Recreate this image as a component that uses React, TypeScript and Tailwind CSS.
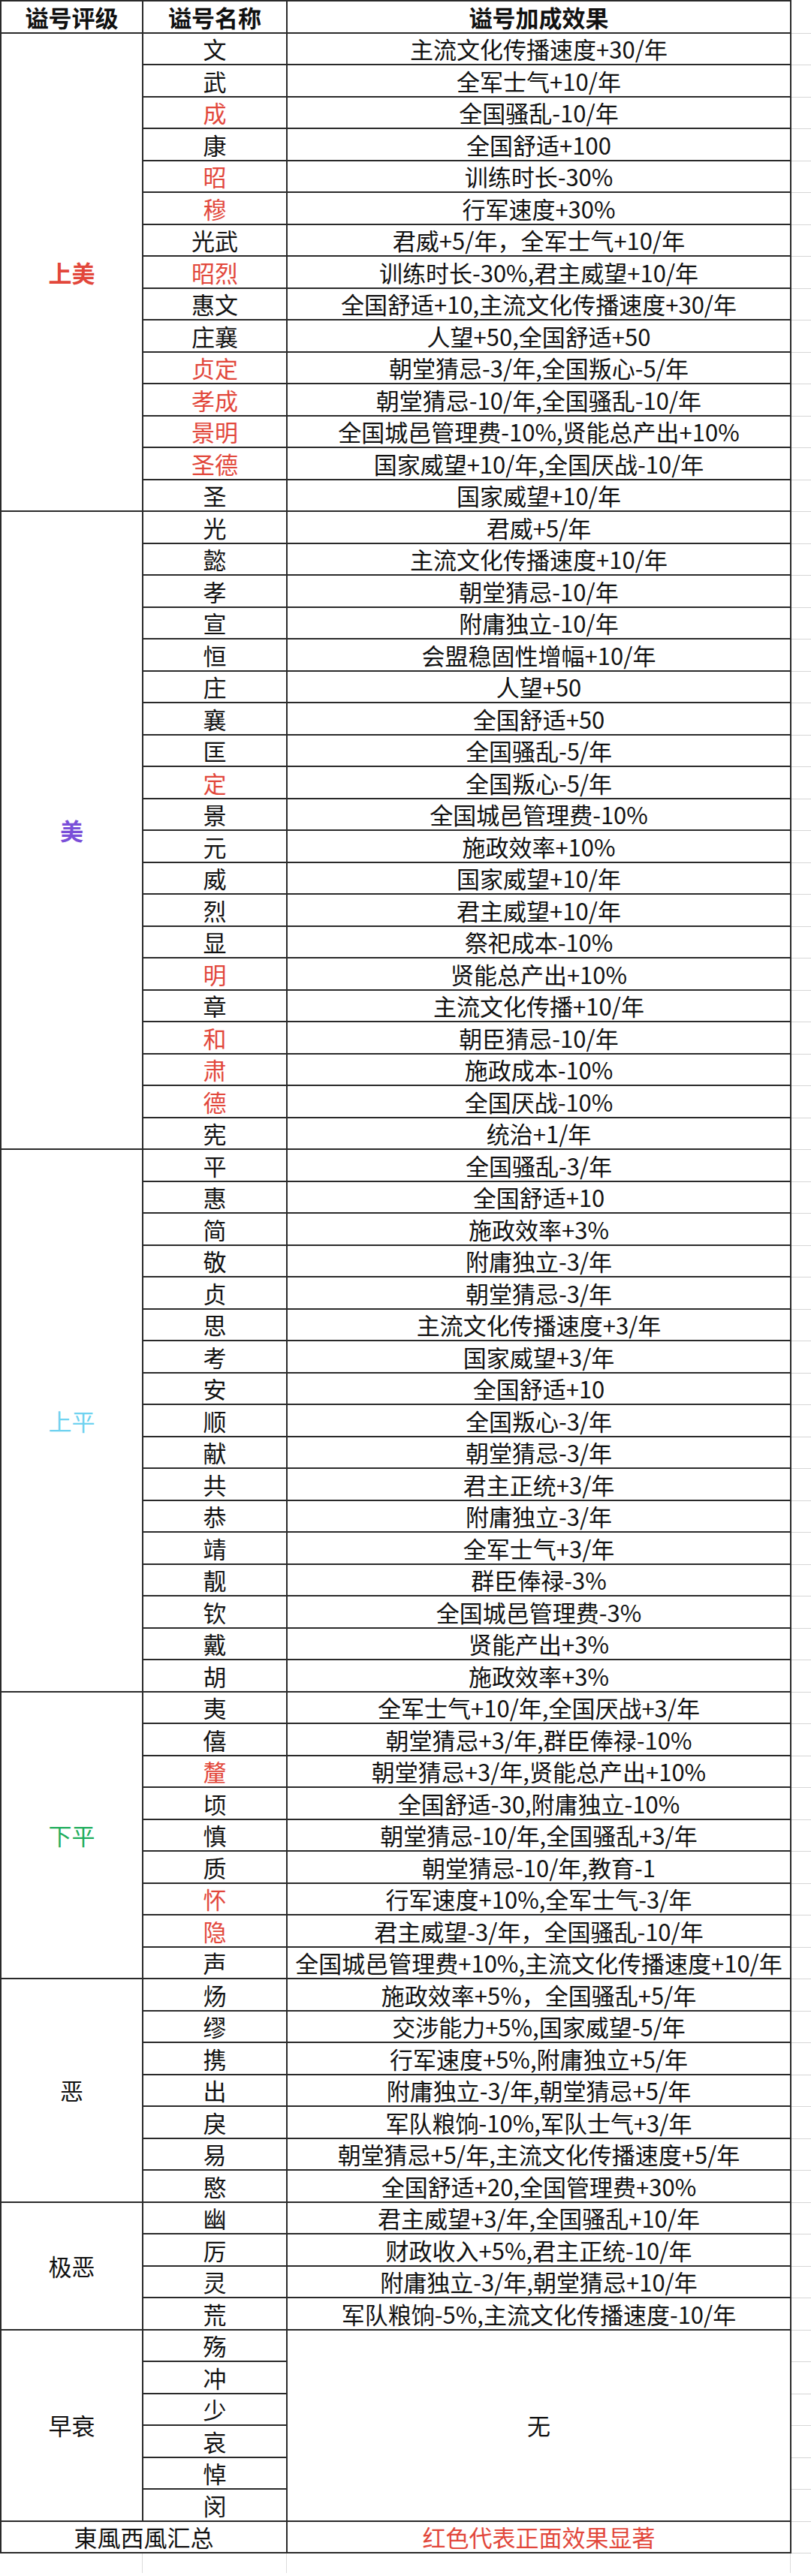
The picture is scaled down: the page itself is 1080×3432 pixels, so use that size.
type Entry = { name: string; effect: string; red?: boolean };

type Group = {
  label: string;
  labelClass: string;
  span: string;
  entries: Entry[];
  merged?: string;
};

const groups: Group[] = [
  {
    label: "上美",
    labelClass: "text-[#e2473b] font-bold",
    span: "row-span-15",
    entries: [
      { name: "文", effect: "主流文化传播速度+30/年" },
      { name: "武", effect: "全军士气+10/年" },
      { name: "成", effect: "全国骚乱-10/年", red: true },
      { name: "康", effect: "全国舒适+100" },
      { name: "昭", effect: "训练时长-30%", red: true },
      { name: "穆", effect: "行军速度+30%", red: true },
      { name: "光武", effect: "君威+5/年，全军士气+10/年" },
      { name: "昭烈", effect: "训练时长-30%,君主威望+10/年", red: true },
      { name: "惠文", effect: "全国舒适+10,主流文化传播速度+30/年" },
      { name: "庄襄", effect: "人望+50,全国舒适+50" },
      { name: "贞定", effect: "朝堂猜忌-3/年,全国叛心-5/年", red: true },
      { name: "孝成", effect: "朝堂猜忌-10/年,全国骚乱-10/年", red: true },
      { name: "景明", effect: "全国城邑管理费-10%,贤能总产出+10%", red: true },
      { name: "圣德", effect: "国家威望+10/年,全国厌战-10/年", red: true },
      { name: "圣", effect: "国家威望+10/年" },
    ],
  },
  {
    label: "美",
    labelClass: "text-[#7a4fd8] font-bold",
    span: "row-span-20",
    entries: [
      { name: "光", effect: "君威+5/年" },
      { name: "懿", effect: "主流文化传播速度+10/年" },
      { name: "孝", effect: "朝堂猜忌-10/年" },
      { name: "宣", effect: "附庸独立-10/年" },
      { name: "恒", effect: "会盟稳固性增幅+10/年" },
      { name: "庄", effect: "人望+50" },
      { name: "襄", effect: "全国舒适+50" },
      { name: "匡", effect: "全国骚乱-5/年" },
      { name: "定", effect: "全国叛心-5/年", red: true },
      { name: "景", effect: "全国城邑管理费-10%" },
      { name: "元", effect: "施政效率+10%" },
      { name: "威", effect: "国家威望+10/年" },
      { name: "烈", effect: "君主威望+10/年" },
      { name: "显", effect: "祭祀成本-10%" },
      { name: "明", effect: "贤能总产出+10%", red: true },
      { name: "章", effect: "主流文化传播+10/年" },
      { name: "和", effect: "朝臣猜忌-10/年", red: true },
      { name: "肃", effect: "施政成本-10%", red: true },
      { name: "德", effect: "全国厌战-10%", red: true },
      { name: "宪", effect: "统治+1/年" },
    ],
  },
  {
    label: "上平",
    labelClass: "text-[#6fd2f0]",
    span: "row-span-17",
    entries: [
      { name: "平", effect: "全国骚乱-3/年" },
      { name: "惠", effect: "全国舒适+10" },
      { name: "简", effect: "施政效率+3%" },
      { name: "敬", effect: "附庸独立-3/年" },
      { name: "贞", effect: "朝堂猜忌-3/年" },
      { name: "思", effect: "主流文化传播速度+3/年" },
      { name: "考", effect: "国家威望+3/年" },
      { name: "安", effect: "全国舒适+10" },
      { name: "顺", effect: "全国叛心-3/年" },
      { name: "献", effect: "朝堂猜忌-3/年" },
      { name: "共", effect: "君主正统+3/年" },
      { name: "恭", effect: "附庸独立-3/年" },
      { name: "靖", effect: "全军士气+3/年" },
      { name: "靓", effect: "群臣俸禄-3%" },
      { name: "钦", effect: "全国城邑管理费-3%" },
      { name: "戴", effect: "贤能产出+3%" },
      { name: "胡", effect: "施政效率+3%" },
    ],
  },
  {
    label: "下平",
    labelClass: "text-[#20ad5c]",
    span: "row-span-9",
    entries: [
      { name: "夷", effect: "全军士气+10/年,全国厌战+3/年" },
      { name: "僖", effect: "朝堂猜忌+3/年,群臣俸禄-10%" },
      { name: "釐", effect: "朝堂猜忌+3/年,贤能总产出+10%", red: true },
      { name: "顷", effect: "全国舒适-30,附庸独立-10%" },
      { name: "慎", effect: "朝堂猜忌-10/年,全国骚乱+3/年" },
      { name: "质", effect: "朝堂猜忌-10/年,教育-1" },
      { name: "怀", effect: "行军速度+10%,全军士气-3/年", red: true },
      { name: "隐", effect: "君主威望-3/年，全国骚乱-10/年", red: true },
      { name: "声", effect: "全国城邑管理费+10%,主流文化传播速度+10/年" },
    ],
  },
  {
    label: "恶",
    labelClass: "text-[#111]",
    span: "row-span-7",
    entries: [
      { name: "炀", effect: "施政效率+5%，全国骚乱+5/年" },
      { name: "缪", effect: "交涉能力+5%,国家威望-5/年" },
      { name: "携", effect: "行军速度+5%,附庸独立+5/年" },
      { name: "出", effect: "附庸独立-3/年,朝堂猜忌+5/年" },
      { name: "戾", effect: "军队粮饷-10%,军队士气+3/年" },
      { name: "易", effect: "朝堂猜忌+5/年,主流文化传播速度+5/年" },
      { name: "愍", effect: "全国舒适+20,全国管理费+30%" },
    ],
  },
  {
    label: "极恶",
    labelClass: "text-[#111]",
    span: "row-span-4",
    entries: [
      { name: "幽", effect: "君主威望+3/年,全国骚乱+10/年" },
      { name: "厉", effect: "财政收入+5%,君主正统-10/年" },
      { name: "灵", effect: "附庸独立-3/年,朝堂猜忌+10/年" },
      { name: "荒", effect: "军队粮饷-5%,主流文化传播速度-10/年" },
    ],
  },
  {
    label: "早衰",
    labelClass: "text-[#111]",
    span: "row-span-6",
    merged: "无",
    entries: ["殇", "冲", "少", "哀", "悼", "闵"].map((name) => ({ name, effect: "" })),
  },
];

const cell = "flex items-center justify-center bg-white whitespace-nowrap";

export default function App() {
  const totalRows = 1 + groups.reduce((n, g) => n + g.entries.length, 0) + 1;

  return (
    <div
      className="w-[1080px] h-[3432px] bg-white text-[31px] leading-[1.2] text-[#111]"
      style={{ fontFamily: '"Noto Sans CJK SC", "Noto Sans", sans-serif' }}
    >
      <div className="flex">
        <div className="grid grid-cols-[187px_190px_669px] auto-rows-[40.5px] gap-[2px] bg-[#2a2a2a] p-[2px] w-[1054px] shrink-0">
          <div className={`${cell} font-bold`}>谥号评级</div>
          <div className={`${cell} font-bold`}>谥号名称</div>
          <div className={`${cell} font-bold`}>谥号加成效果</div>

          {groups.map((g) => (
            <Rows key={g.label} group={g} />
          ))}

          <div className={`${cell} col-span-2`}>東風西風汇总</div>
          <div className={`${cell} text-[#e2473b]`}>红色代表正面效果显著</div>
        </div>

        {/* spreadsheet gridlines past the table edge */}
        <div className="flex-1 flex flex-col pt-[2px]">
          {Array.from({ length: totalRows }).map((_, i) => (
            <div key={i} className="h-[42.5px] shrink-0 border-b border-[#d6d6d6]" />
          ))}
        </div>
      </div>

      <div className="flex h-[26px]">
        <div className="w-[190px] border-r border-[#dcdcdc]" />
        <div className="w-[192px] border-r border-[#dcdcdc]" />
        <div className="w-[671px] border-r border-[#dcdcdc]" />
      </div>
    </div>
  );
}

function Rows({ group }: { group: Group }) {
  return (
    <>
      <div className={`${cell} ${group.span} ${group.labelClass}`}>{group.label}</div>
      {group.entries.map((e, i) => (
        <Entry key={e.name} entry={e} first={i === 0} group={group} />
      ))}
    </>
  );
}

function Entry({ entry, first, group }: { entry: Entry; first: boolean; group: Group }) {
  return (
    <>
      <div className={`${cell} ${entry.red ? "text-[#e2473b]" : ""}`}>{entry.name}</div>
      {group.merged ? (
        first && <div className={`${cell} ${group.span}`}>{group.merged}</div>
      ) : (
        <div className={cell}>{entry.effect}</div>
      )}
    </>
  );
}
